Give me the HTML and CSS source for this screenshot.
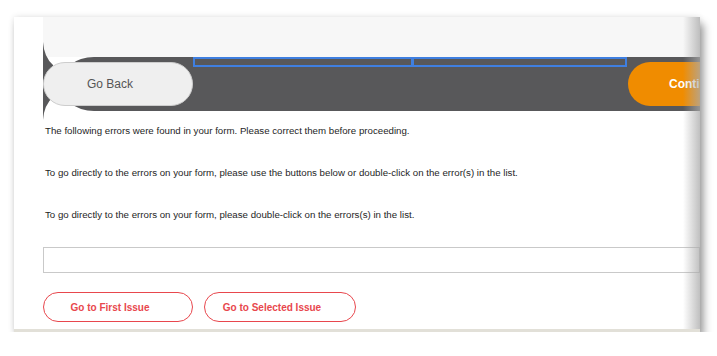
FILE: index.html
```html
<!DOCTYPE html>
<html>
<head>
  <title>Form Errors</title>
  <meta charset="UTF-8">
  <link rel="stylesheet" href="styles.css">
</head>

<body>
  <div class="card">

    <div class="topBand"></div>

    <div class="navWrap">
      <svg class="cusp" width="12" height="78" viewBox="0 0 12 78">
        <path d="M0 0 Q1 15 10 23 L10 55 Q1 63 0 78 Z" fill="#58585a"/>
      </svg>
      <div class="navBar">
        <button class="pill backPill">Go Back</button>
        <div class="tabGroup">
          <span class="tab tabFirst"></span>
          <span class="tab tabSecond"></span>
        </div>
        <button class="pill nextPill">Continue</button>
      </div>
    </div>

    <div class="errorBody">
      <p class="msg">The following errors were found in your form. Please correct them before proceeding.</p>
      <p class="msg">To go directly to the errors on your form, please use the buttons below or double-click on the error(s) in the list.</p>
      <p class="msg">To go directly to the errors on your form, please double-click on the errors(s) in the list.</p>

      <div class="errorList"></div>

      <div class="issueButtons">
        <button class="issueBtn">Go to First Issue</button>
        <button class="issueBtn wide">Go to Selected Issue</button>
      </div>
    </div>

  </div>
</body>

</html>
```

FILE: styles.css
```css
body {
  margin: 0;
  background: #fff;
  font-family: "Liberation Sans", Arial, sans-serif;
}
.card {
  position: relative;
  width: 686px;
  margin: 17px 0 0 14px;
  background: #fff;
  border-bottom: 3px solid #e2e0d8;
  overflow: hidden;
  box-shadow: 4px 7px 8px rgba(0, 0, 0, 0.35), 0 0 6px rgba(0, 0, 0, 0.12);
}
/* soft fade on the right edge of the window */
.card::after {
  content: "";
  position: absolute;
  top: 0;
  right: 0;
  bottom: 0;
  width: 17px;
  background: linear-gradient(to right, rgba(170, 170, 170, 0), rgba(170, 170, 170, 0.75));
  pointer-events: none;
}
.topBand {
  height: 40px;
  margin-left: 29px;
  background: #f7f7f7;
}
.navWrap {
  position: relative;
  margin-left: 29px;
}
.cusp {
  position: absolute;
  left: 0;
  top: -15px;
}
.navBar {
  position: relative;
  height: 54px;
  margin-left: 17px;
  background: #58585a;
  border-radius: 34px 0 0 34px / 27px 0 0 27px;
  display: flex;
  align-items: center;
}
.pill {
  box-sizing: border-box;
  flex: none;
  width: 150px;
  height: 44px;
  padding: 0 16px 0 0;
  border-radius: 22px;
  font-family: "Liberation Sans", Arial, sans-serif;
  font-size: 12px;
  text-align: center;
}
.backPill {
  margin-left: -17px;
  background: #efefef;
  border: 1px solid #cdcdcd;
  color: #555;
}
.nextPill {
  margin-left: 1px;
  background: #f08c00;
  border: none;
  color: #fff;
  font-weight: bold;
}
.tabGroup {
  align-self: flex-start;
  display: flex;
  width: 434px;
}
.tab {
  box-sizing: border-box;
  height: 10px;
  border: 2px solid #3f7fe0;
}
.tabFirst {
  width: 220px;
}
.tabSecond {
  width: 214px;
  border-left-width: 1px;
}
.errorBody {
  padding: 14px 0 7px 29px;
}
.msg {
  margin: 0 0 30px 0;
  padding-left: 2px;
  font-size: 9.7px;
  line-height: 12px;
  color: #1e1e1e;
}
.errorList {
  box-sizing: border-box;
  height: 26px;
  margin-top: -4px;
  border: 1px solid #c9c9c9;
}
.issueButtons {
  display: flex;
  gap: 11px;
  margin-top: 19px;
}
.issueBtn {
  box-sizing: border-box;
  width: 150px;
  height: 30px;
  padding: 0 16px 0 0;
  background: #fff;
  border: 1px solid #e8474d;
  border-radius: 15px;
  color: #e8474d;
  font-family: "Liberation Sans", Arial, sans-serif;
  font-size: 10px;
  font-weight: bold;
  text-align: center;
}
.issueBtn.wide {
  width: 152px;
}
```
